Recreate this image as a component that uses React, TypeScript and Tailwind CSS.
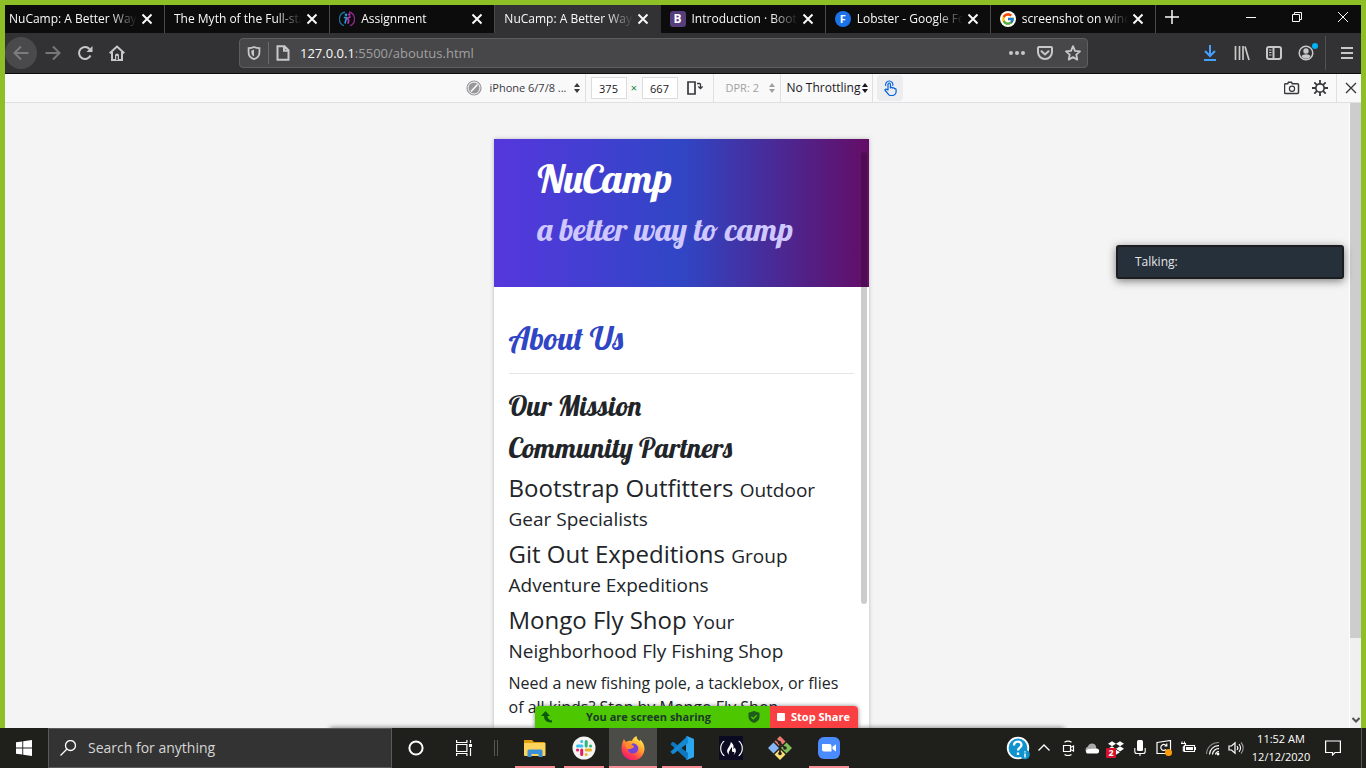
import type { ReactNode } from "react";
import { FcGoogle } from "react-icons/fc";
import { FaFreeCodeCamp, FaDropbox } from "react-icons/fa";

type IconProps = { children: ReactNode; className?: string; box?: string };

function Icon({ children, className = "size-4", box = "0 0 16 16" }: IconProps) {
  return (
    <svg viewBox={box} className={`shrink-0 ${className}`} fill="none" stroke="currentColor" strokeWidth="2" aria-hidden="true">
      {children}
    </svg>
  );
}

/* ---------- Tab strip ---------- */

const LearnIcon = () => (
  <Icon>
    <path d="M6 1A7.200 7.200 0 0 0 5 14.700" stroke="#1c6f9c" strokeWidth="1.300" />
    <path d="M10 1A7.200 7.200 0 0 1 11 14.700" stroke="#8a2a8c" strokeWidth="1.300" />
    <path d="M4.800 6.500h2.700L6 12.500" stroke="#1fa3e0" strokeWidth="1.600" />
    <path d="M11.500 5.500L8.500 7.500l1.300 2.300-1 3" stroke="#c02fb0" strokeWidth="1.600" />
    <circle cx="7" cy="3.800" r="1.300" fill="#1fa3e0" stroke="none" />
    <circle cx="10.300" cy="3.500" r="1.200" fill="#c02fb0" stroke="none" />
  </Icon>
);

const BootstrapBadge = () => (
  <span className="flex size-4 shrink-0 items-center justify-center rounded-[3px] bg-[#563d7c] text-xs font-bold text-white">B</span>
);
const FontsBadge = () => (
  <span className="flex size-4 shrink-0 items-center justify-center rounded-full bg-[#1a73e8] text-[11px] font-bold text-white">F</span>
);
const GoogleBadge = () => (
  <span className="flex size-4 shrink-0 items-center justify-center rounded-full bg-white">
    <FcGoogle className="size-3.5" />
  </span>
);

const tabs: { title: string; icon?: ReactNode; active?: boolean }[] = [
  { title: "NuCamp: A Better Way T" },
  { title: "The Myth of the Full-stac" },
  { title: "Assignment", icon: <LearnIcon /> },
  { title: "NuCamp: A Better Way T", active: true },
  { title: "Introduction · Boots", icon: <BootstrapBadge /> },
  { title: "Lobster - Google Fon", icon: <FontsBadge /> },
  { title: "screenshot on windo", icon: <GoogleBadge /> },
];

function TabStrip() {
  return (
    <div className="flex h-7 bg-[#0c0c0d] text-xs text-[#f9f9fa]">
      <div className="flex w-[1151px]">
        {tabs.map((t, i) => (
          <div
            key={i}
            className={`flex min-w-0 items-center border-r pr-[11px] ${i === 0 ? "w-[160px] pl-1" : "flex-1 pl-[9px]"} ${
              t.active ? "border-[#323234] bg-[#323234]" : "border-[#4a4a4c]"
            }`}
          >
            {t.icon && <span className="mr-1.5">{t.icon}</span>}
            <span className="min-w-0 flex-1 overflow-hidden whitespace-nowrap [mask-image:linear-gradient(to_left,transparent,black_26px)]">
              {t.title}
            </span>
            <button aria-label={`Close ${t.title}`} className="ml-1">
              <Icon className="size-3" box="0 0 12 12">
                <path d="M1.500 1.500l9 9M10.500 1.500l-9 9" />
              </Icon>
            </button>
          </div>
        ))}
      </div>
      <button aria-label="New tab" className="flex w-8 items-center justify-center pb-1">
        <Icon className="size-3.5" box="0 0 14 14">
          <path d="M7 0v14M0 7h14" strokeWidth="1.500" />
        </Icon>
      </button>
      <div className="ml-auto flex pb-1">
        <button aria-label="Minimize" className="flex w-[46px] items-center justify-center">
          <Icon className="size-2.5" box="0 0 10 10"><path d="M0 5.500h10" strokeWidth="1" /></Icon>
        </button>
        <button aria-label="Restore" className="flex w-[46px] items-center justify-center">
          <Icon className="size-2.5" box="0 0 10 10"><path d="M.5 2.500h7v7h-7zM2.500 2.500v-2h7v7h-2" strokeWidth="1" /></Icon>
        </button>
        <button aria-label="Close window" className="flex w-[41px] items-center justify-center pl-1">
          <Icon className="size-2.5" box="0 0 10 10"><path d="M0 0l10 10M10 0L0 10" strokeWidth="1" /></Icon>
        </button>
      </div>
    </div>
  );
}

/* ---------- Navigation bar ---------- */

function NavBar() {
  return (
    <div className="flex h-[41px] items-center border-b border-[#0c0c0d] bg-[#323234] pr-1.5 text-[#c8c8c9]">
      <div className="flex items-center">
        <button aria-label="Back" className="flex size-8 items-center justify-center rounded-full bg-[#4a4a4c] text-[#7c7c7e]">
          <Icon><path d="M15.500 8H1.500M8 1.500L1.500 8 8 14.500" /></Icon>
        </button>
        <button aria-label="Forward" className="flex size-8 items-center justify-center text-[#77777a]">
          <Icon><path d="M.5 8h14M8 1.500L14.500 8 8 14.500" /></Icon>
        </button>
        <button aria-label="Reload" className="flex size-8 items-center justify-center">
          <Icon>
            <path d="M13.500 10.500A6 6 0 1 1 12.500 4" />
            <path d="M15.500 1v6h-6z" fill="currentColor" stroke="none" />
          </Icon>
        </button>
        <button aria-label="Home" className="flex size-8 items-center justify-center">
          <Icon>
            <path d="M.7 8.200L8 1.500l7.300 6.700M3 7v8h10V7" />
            <path d="M6 15v-4.500a2 2 0 0 1 4 0V15z" fill="currentColor" stroke="none" />
            <path d="M8 11v4" stroke="#323234" strokeWidth="1.500" />
          </Icon>
        </button>
      </div>

      <div className="ml-[106px] flex h-[30px] flex-1 items-center rounded-sm border border-[#5e5e60] bg-[#474749] px-1.5">
        <button aria-label="Tracking protection" className="flex w-4 justify-center">
          <Icon className="size-3.5">
            <path d="M8 1.200C6 2.200 4 2.500 1.800 2.500v5C1.800 11 4.500 14 8 15c3.500-1 6.200-4 6.200-7.500v-5C12 2.500 10 2.200 8 1.200z" />
            <path d="M8 4v8c-2-1-3-2.500-3-4.500V5c1 0 2-.3 3-1z" fill="currentColor" stroke="none" />
          </Icon>
        </button>
        <span className="mx-1.5 h-[22px] w-px bg-[#6a6a6e]" />
        <button aria-label="Site information" className="flex w-4 justify-center">
          <Icon><path d="M3.500 1.200h6l4 4v9.600H2.500V1.200zM9 1.500v4.200h4.200" /></Icon>
        </button>
        <p className="mt-0.5 ml-[9px] flex-1 text-[13px] text-[#a0a0a2]">
          <span className="text-[#f9f9fa]">127.0.0.1</span>:5500/aboutus.html
        </p>
        <div className="flex items-center gap-3">
          <button aria-label="Page actions">
            <Icon>
              <g fill="currentColor" stroke="none"><circle cx="2" cy="8" r="2" /><circle cx="8" cy="8" r="2" /><circle cx="14" cy="8" r="2" /></g>
            </Icon>
          </button>
          <button aria-label="Save to Pocket">
            <Icon>
              <path d="M2 2h12a1 1 0 0 1 1 1v4a7 7 0 0 1-14 0V3a1 1 0 0 1 1-1z" />
              <path d="M4.500 6.200L8 9.500l3.500-3.300" strokeLinecap="round" />
            </Icon>
          </button>
          <button aria-label="Bookmark">
            <Icon><path d="M8 1.200l2 4.600 5 .5-3.700 3.400 1 4.900L8 12.100l-4.300 2.500 1-4.900L1 6.300l5-.5z" strokeLinejoin="round" strokeWidth="1.800" /></Icon>
          </button>
        </div>
      </div>

      <div className="ml-[114px] flex items-center gap-4">
        <button aria-label="Downloads" className="text-[#45a1ff]">
          <Icon><path d="M8 0v11M3 6l5 5 5-5M2 15h12" /></Icon>
        </button>
        <button aria-label="Library">
          <Icon><path d="M1.500 1v14M5.500 1v14M9 1v14M11 1.500l4 13.500" strokeWidth="1.700" /></Icon>
        </button>
        <button aria-label="Sidebars">
          <Icon><rect x="1" y="2" width="14" height="12" rx="2" /><path d="M7.500 2v12" /><path d="M3 5h2.500M3 7.500h2.500M3 10h2.500" strokeWidth="1" /></Icon>
        </button>
        <button aria-label="Account" className="relative">
          <Icon>
            <circle cx="8" cy="8" r="6.800" strokeWidth="1.500" />
            <circle cx="8" cy="6" r="2.700" fill="currentColor" stroke="none" />
            <path d="M3.500 11.500c1-3 8-3 9 0a5.500 5.500 0 0 1-9 0z" fill="currentColor" stroke="none" />
          </Icon>
          <span className="absolute -top-0.5 -right-1 size-1.5 rounded-full bg-[#00b3f4]" />
        </button>
      </div>
      <span className="mr-[13px] ml-[11px] h-[34px] w-px bg-[#525254]" />
      <button aria-label="Menu">
        <Icon><path d="M2 3h12M2 8h12M2 13h12" /></Icon>
      </button>
    </div>
  );
}

/* ---------- Responsive design toolbar ---------- */

const Updown = () => (
  <svg viewBox="0 0 6 10" className="h-2.5 w-1.5 shrink-0" fill="currentColor" aria-hidden="true">
    <path d="M0 4l3-4 3 4zM0 6h6l-3 4z" />
  </svg>
);

function DeviceToolbar() {
  const size = "h-[22px] w-9 border border-[#dcdcdd] bg-white text-center text-[11px] text-[#18181a] outline-none";
  return (
    <div className="grid h-[29px] grid-cols-[1fr_auto_1fr] items-center border-b border-[#e0e0e2] bg-[#f9f9fa] pl-0.5 text-[#38383d]">
      <span />
      <div className="flex h-full items-center text-[11px]">
        <button className="flex h-full w-[120px] items-center border-r border-[#e0e0e2]">
          <Icon className="size-4 text-[#98989a]">
            <circle cx="8" cy="8" r="7" strokeWidth="1.200" />
            <circle cx="8" cy="8" r="5.500" fill="currentColor" stroke="none" />
            <path d="M5 11.500L11.500 4.500" stroke="#fff" strokeWidth="1.500" />
          </Icon>
          <span className="ml-2 flex-1 text-left whitespace-nowrap">iPhone 6/7/8 ...</span>
          <span className="mr-[5px]"><Updown /></span>
        </button>
        <input aria-label="Width" className={`ml-[5px] ${size}`} defaultValue="375" />
        <span className="w-[15px] text-center text-[#12833a]">×</span>
        <input aria-label="Height" className={size} defaultValue="667" />
        <button aria-label="Rotate viewport" className="flex h-full w-9 items-center justify-center border-r border-[#e0e0e2]">
          <Icon>
            <path d="M1 2h7v12H1z" strokeWidth="1.700" />
            <path d="M10 3.500h2.500a1 1 0 0 1 1 1V8M11.300 6.500l2.200 2 2.200-2" strokeWidth="1.300" />
          </Icon>
        </button>
        <button className="flex h-full w-[67px] items-center justify-between border-r border-[#e0e0e2] pr-[5px] pl-3 text-[#a0a0a3]">
          DPR: 2 <Updown />
        </button>
        <button className="flex h-full w-[92px] items-center justify-between border-r border-[#e0e0e2] pr-1 pl-1.5 text-xs whitespace-nowrap text-[#18181a]">
          No Throttling <Updown />
        </button>
        <button aria-label="Enable touch simulation" className="ml-1 flex h-[26px] w-[26px] items-center justify-center rounded-sm bg-[#ededf0] text-[#0060df]">
          <Icon>
            <path d="M6 10V4.200a1.200 1.200 0 0 1 2.400 0V8c.3-.9 2-.8 2.200.2.500-.7 1.900-.4 2 .5.700-.3 1.500.1 1.500 1v1.800c0 2-1.500 4-4 4H8.500c-1 0-1.500-.5-2-1.200L3.200 10.500c-.6-1 .7-1.900 1.500-1.100z" strokeWidth="1.200" strokeLinejoin="round" />
            <path d="M3.800 6A3.700 3.700 0 1 1 10.700 6" strokeWidth="1.100" />
          </Icon>
        </button>
      </div>
      <div className="flex h-full items-center justify-end gap-3 pr-0.5">
        <button aria-label="Take a screenshot">
          <Icon><path d="M1.500 3.800h2.200l.8-1.600h3l.8 1.600h5.200a1 1 0 0 1 1 1v7.700a1 1 0 0 1-1 1h-12a1 1 0 0 1-1-1V4.800a1 1 0 0 1 1-1z" strokeWidth="1.500" /><circle cx="8" cy="8.800" r="2.600" strokeWidth="1.200" /></Icon>
        </button>
        <button aria-label="Settings">
          <Icon><circle cx="8" cy="8" r="4.200" strokeWidth="1.700" /><path d="M8 0v4M8 12v4M0 8h4M12 8h4M2.300 2.300l2.800 2.800M10.900 10.900l2.800 2.800M13.700 2.300l-2.800 2.800M5.100 10.900l-2.800 2.800" strokeWidth="1.800" /></Icon>
        </button>
        <span className="-ml-1 h-full w-px bg-[#e0e0e2]" />
        <button aria-label="Close responsive design mode" className="-ml-1.5 flex size-4 items-center justify-center">
          <Icon className="size-3" box="0 0 12 12"><path d="M1 1l10 10M11 1L1 11" strokeWidth="1.400" /></Icon>
        </button>
      </div>
    </div>
  );
}

/* ---------- Page inside the device ---------- */

const partners = [
  ["Bootstrap Outfitters", "Outdoor Gear Specialists"],
  ["Git Out Expeditions", "Group Adventure Expeditions"],
  ["Mongo Fly Shop", "Your Neighborhood Fly Fishing Shop"],
];

const script = "font-['Lobster','Liberation_Serif',serif] font-normal";

function PhonePage() {
  return (
    <div className="relative w-[375px] shrink-0 overflow-hidden bg-white text-[#212529] shadow-[0_0_4px_rgba(0,0,0,0.25)]">
      <header className="h-[148px] bg-[linear-gradient(to_right,#5637dd,#3046c5_50%,#640d66)] px-11 pt-[15px]">
        <h1 className={`${script} mb-2 text-[40px] leading-[48px] text-white`}>NuCamp</h1>
        <h2 className={`${script} text-[32px] leading-[38px] whitespace-nowrap text-[#cec8ff]`}>a better way to camp</h2>
      </header>
      <main className="px-[15px] pt-8">
        <h2 className={`${script} text-[32px] leading-[38px] text-[#3046c5]`}>About Us</h2>
        <hr className="mt-4 mb-[15px] border-[#e5e5e5]" />
        <h3 className={`${script} mb-2 text-[28px] leading-[34px]`}>Our Mission</h3>
        <h3 className={`${script} mb-2 text-[28px] leading-[34px]`}>Community Partners</h3>
        {partners.map(([name, kind]) => (
          <h4 key={name} className="mb-2 text-2xl leading-[29px]">
            {name} <small className="text-[19px] leading-[23px]">{kind}</small>
          </h4>
        ))}
        <p className="text-base leading-6">
          Need a new fishing pole, a tacklebox, or flies of all kinds? Stop by Mongo Fly Shop.
        </p>
      </main>
      <div className="absolute top-[13px] right-0.5 h-[452px] w-1.5 rounded-full bg-black/20" />
    </div>
  );
}

/* ---------- Meeting overlays ---------- */

function ShareBar() {
  return (
    <div className="absolute bottom-0 left-[530px] flex h-[22px] w-[323px] overflow-hidden rounded-t text-[11px] font-bold shadow-[0_0_4px_rgba(0,0,0,0.5)]">
      <div className="flex flex-1 items-center justify-between bg-[#4dc700] pr-2.5 pl-1.5 text-[#1c3a2c]">
        <Icon className="size-3 text-[#0a5a10]" box="0 0 12 12"><path d="M4.500 0L9 5H6.500c0 2.500 1.500 4 4.500 4.500v2C6 11.500 3 9.500 3 5H0z" fill="currentColor" stroke="none" /></Icon>
        <span className="pr-1">You are screen sharing</span>
        <Icon className="size-3 text-[#1d5c1a]" box="0 0 12 12">
          <path d="M6 0l5.500 1.800V6c0 3-2.500 5-5.500 6C3 11 .5 9 .5 6V1.800z" fill="currentColor" stroke="none" />
          <path d="M3.300 5.800l2 2 3.400-3.500" stroke="#4dc700" strokeWidth="1.300" />
        </Icon>
      </div>
      <button className="flex w-[88px] items-center gap-1.5 bg-[#fb4043] pl-[7px] whitespace-nowrap text-white">
        <span className="size-2 rounded-[1px] bg-white" />
        Stop Share
      </button>
    </div>
  );
}

/* ---------- Taskbar ---------- */

const Explorer = () => (
  <Icon className="size-6" box="0 0 24 24">
    <g stroke="none">
      <path d="M1 4h8l2 2h10a1 1 0 0 1 1 1v3H1z" fill="#e0a010" />
      <path d="M1 7h21.500v12a1 1 0 0 1-1 1H2a1 1 0 0 1-1-1z" fill="#fcd45c" />
      <path d="M4.500 21v-6a1.500 1.500 0 0 1 1.500-1.500h12a1.500 1.500 0 0 1 1.500 1.500v6H15.500v-3h-7v3z" fill="#3a8fd8" />
    </g>
  </Icon>
);
const Slack = () => (
  <Icon className="size-6" box="0 0 24 24">
    <circle cx="12" cy="12" r="11.500" fill="#f6f4f3" stroke="none" />
    <g strokeWidth="3" strokeLinecap="round">
      <path d="M9.700 5.500v.1M5.500 9.900h4.400" stroke="#36c5f0" />
      <path d="M14.200 5.500v4.400M18.500 9.900h.1" stroke="#2eb67d" />
      <path d="M14.200 14.100h4.400M14.200 18.500v.1" stroke="#ecb22e" />
      <path d="M9.700 14.100v4.400M5.500 14.100h.1" stroke="#e01e5a" />
    </g>
  </Icon>
);
const Firefox = () => (
  <Icon className="size-6" box="0 0 24 24">
    <defs>
      <linearGradient id="ffx" x1=".8" y1=".05" x2=".2" y2="1">
        <stop offset="0" stopColor="#fff44f" /><stop offset=".4" stopColor="#ff9a2e" /><stop offset=".75" stopColor="#ff3750" /><stop offset="1" stopColor="#e31587" />
      </linearGradient>
    </defs>
    <g stroke="none">
      <path d="M3 3c.5 1.500 1.300 2.300 2.300 3C7 4.800 9.500 4.700 11 5c.5-2 2-4 4.500-5 .2 2.500 1.500 3.500 3 5 .5-.5.500-1 .5-1.500 3 2.500 4.500 6 4.500 9.200A11.500 11.500 0 0 1 .5 13C.5 9 1.500 5.500 3 3z" fill="url(#ffx)" />
      <path d="M11 7.500c3-.5 6.500 1.500 6.300 5.200-.2 3-2.500 4.800-5.300 4.800s-5.200-2-5.200-4.800c1.400.8 3 .5 4-.3 1-.7 2-1 2.300-1.600-1.300-.2-2.300-.5-2.600-1.700 0-.7.2-1.200.5-1.600z" fill="#7543d6" />
      <path d="M4 7.500c2-1 4-.5 5 1.200 1 .6 3 .2 4 1.500-.6 1.300-2.600 1.300-3.700 2.300-1 .8-2.500.6-3 .2C4.500 11 3.700 9.500 4 7.500z" fill="#ff8a30" />
    </g>
  </Icon>
);
const VsCode = () => (
  <Icon className="size-6" box="0 0 24 24">
    <g stroke="none">
      <path d="M17 0L24 3v18l-7 3-1-1V1z" fill="#2ba7f0" />
      <path d="M17.500 24L1 8.700l-.2-1L2.500 6l1 0L18 17z" fill="#0f77bd" />
      <path d="M17.500 0L1 15.300l-.2 1L2.500 18h1L18 7z" fill="#1488d0" />
    </g>
  </Icon>
);
const FreeCodeCamp = () => (
  <span className="flex size-6 items-center justify-center bg-[#0a0a23] text-white"><FaFreeCodeCamp className="size-[23px]" /></span>
);
const Git = () => (
  <Icon className="size-6" box="0 0 24 24">
    <g stroke="none">
      <path d="M12 0l5.500 5.500L12 11 6.500 5.500z" fill="#ec7a70" />
      <path d="M18.500 6.500L24 12l-5.500 5.500L13 12z" fill="#7fbf5a" />
      <path d="M5.500 6.500L11 12l-5.500 5.500L0 12z" fill="#86b4f4" />
      <path d="M12 13l5.500 5.500L12 24l-5.500-5.500z" fill="#f8de76" />
      <circle cx="11.500" cy="6.500" r="1.700" fill="#2b211c" /><circle cx="12" cy="17.500" r="1.800" fill="#2b211c" /><circle cx="17" cy="12" r="1.800" fill="#2b211c" />
    </g>
    <path d="M12 17.500V7M12 7l5 5M7.500 3l4.500 4" stroke="#2b211c" strokeWidth="1.700" />
  </Icon>
);
const Zoom = () => (
  <Icon className="size-6" box="0 0 24 24">
    <rect x="1" y="1" width="22" height="22" rx="6" fill="#4a8cff" stroke="none" />
    <path d="M5 8h7.500a2 2 0 0 1 2 2v5.500H7a2 2 0 0 1-2-2zM15.500 10.800L19 8.300v7.200l-3.500-2.500z" fill="#fff" stroke="none" />
  </Icon>
);

const apps = [
  { name: "File Explorer", icon: <Explorer />, line: "w-10" },
  { name: "Slack", icon: <Slack />, line: "w-10" },
  { name: "Firefox", icon: <Firefox />, line: "w-12", active: true },
  { name: "Visual Studio Code", icon: <VsCode />, line: "w-10" },
  { name: "freeCodeCamp", icon: <FreeCodeCamp />, line: "" },
  { name: "Git Bash", icon: <Git />, line: "" },
  { name: "Zoom", icon: <Zoom />, line: "w-10" },
];

function Tray() {
  return (
    <div className="ml-auto flex h-full items-center text-white">
      <button aria-label="Support" className="mr-1.5">
        <Icon className="size-6" box="0 0 24 24">
          <circle cx="12" cy="12" r="10.300" fill="#0f93cf" stroke="#fff" strokeWidth="1.800" />
          <path d="M8 9.500c0-5 7.500-5 7.500-.6 0 2.600-3.500 2.800-3.500 5.600M12 16.500v2.500" strokeWidth="2.300" />
          <circle cx="19" cy="18.500" r="4.800" fill="#0f93cf" stroke="none" />
          <path d="M19 15.300v1.200M19 17.500v4" strokeWidth="1.400" />
        </Icon>
      </button>
      <div className="flex items-center gap-2">
        <button aria-label="Show hidden icons"><Icon><path d="M2.500 10.500L8 5l5.500 5.500" strokeWidth="1.300" /></Icon></button>
        <button aria-label="Meet now"><Icon><path d="M3.500 5.500h7v6h-7zM10.500 7.500l3-1.500v5l-3-1.500M4.500 2.300c2-1.300 5-1.300 7 0M4.500 14.500c2 1.300 5 1.300 7 0" strokeWidth="1.200" /></Icon></button>
        <button aria-label="OneDrive"><Icon><path d="M3.500 13a3.300 3.300 0 0 1 .2-6.200A4.500 4.500 0 0 1 12 6l.5 7z" fill="#a9a9a9" stroke="none" /><path d="M3 13.500a2.500 2.500 0 0 1 1.500-4.500l8.500-.5a2.600 2.600 0 0 1 .5 5z" fill="#fff" stroke="none" /></Icon></button>
        <button aria-label="Dropbox" className="relative">
          <FaDropbox className="size-4" />
          <span className="absolute -bottom-0.5 -left-0.5 flex h-2.5 w-2.5 items-center justify-center rounded-[1px] bg-[#d9102b] text-[9px] font-bold">2</span>
        </button>
        <button aria-label="Microphone"><Icon><rect x="5" y="0" width="6" height="11" rx="1.500" fill="#fff" stroke="none" /><path d="M2.800 8v3.500a2 2 0 0 0 2 2h6.400a2 2 0 0 0 2-2V8M8 13.500V16" strokeWidth="1.100" /></Icon></button>
        <button aria-label="Updates"><Icon><path d="M1 2.500l13.500-2v13L1 13.500zM10.500 6A3 3 0 1 0 10 9.500M10.800 3.500V6H8.500" strokeWidth="1.200" /><circle cx="12.500" cy="12.500" r="3.500" fill="#ff9a0a" stroke="none" /></Icon></button>
        <button aria-label="Battery"><Icon><path d="M4.500 5.500h10v6h-10zM15.500 7v3M2 1.500v2M4.500 1.500v2M1 3.500h4.500v1.500L3.300 7v4h1" strokeWidth="1.100" /><path d="M6 7h7v3H6z" fill="#fff" stroke="none" /></Icon></button>
        <button aria-label="Wi-Fi"><Icon><path d="M2.500 14A12 12 0 0 1 15 2.500" stroke="#888" strokeWidth="1.200" /><path d="M5.500 14.500A9 9 0 0 1 15 5.700M8.500 14.500A6 6 0 0 1 15 8.700M11.500 14.500a3.500 3.500 0 0 1 3.500-3" strokeWidth="1.200" /><circle cx="14" cy="14" r="1.400" fill="#fff" stroke="none" /></Icon></button>
        <button aria-label="Volume"><Icon><path d="M1 6h2.500L7 2.800v10.400L3.500 10H1z" strokeWidth="1.200" /><path d="M9 6a3 3 0 0 1 0 4M11 4.200a5.500 5.500 0 0 1 0 7.600" strokeWidth="1.100" /><path d="M13 2.500a8 8 0 0 1 0 11" stroke="#999" strokeWidth="1.100" /></Icon></button>
      </div>
      <div className="w-[74px] text-center text-[11px] leading-[18px] whitespace-nowrap">
        <p>11:52 AM</p>
        <p>12/12/2020</p>
      </div>
      <button aria-label="Notifications" className="mr-5 ml-[7px]">
        <Icon className="size-4"><path d="M.6 1h14.800v11.500H10L7.500 15v-2.500H.6z" strokeWidth="1.200" /></Icon>
      </button>
      <span className="mr-1 h-full w-px bg-[#55564f]" />
    </div>
  );
}

function Taskbar() {
  return (
    <footer className="flex h-10 shrink-0 items-center bg-[#1f201b]">
      <button aria-label="Start" className="flex h-full w-12 items-center justify-center text-white">
        <Icon><path d="M0 2.300L6.300 1.400v6.100H0zM7.200 1.200L16 0v7.500H7.200zM0 8.400h6.300v6.200L0 13.700zM7.200 8.400H16V16l-8.800-1.300z" fill="currentColor" stroke="none" /></Icon>
      </button>
      <label className="flex h-full w-[344px] items-center gap-3 border border-[#5a5a5a] bg-[#333333] pl-[11px] text-white">
        <Icon><circle cx="10.500" cy="5.500" r="5" strokeWidth="1.300" /><path d="M7 9L.5 15.500" strokeWidth="1.300" /></Icon>
        <input
          type="text"
          aria-label="Search"
          placeholder="Search for anything"
          className="w-full bg-transparent text-sm text-white outline-none placeholder:text-[#d6d6d6]"
        />
      </label>
      <button aria-label="Cortana" className="flex w-12 justify-center text-white">
        <Icon><circle cx="8" cy="8" r="6.600" /></Icon>
      </button>
      <button aria-label="Task view" className="flex w-12 justify-center text-white">
        <Icon><path d="M.6 0v2.500h10.300V0M.6 16v-2.500h10.300V16M.6 4.500h10.300v7H.6zM14.500 0v3M14.500 8v8" strokeWidth="1.200" /><path d="M13 4h3v3h-3z" fill="#fff" stroke="none" /></Icon>
      </button>
      <span className="mr-[13px] ml-1.5 h-4 w-1 border-x border-[#55564f]" />
      <div className="flex h-full gap-px">
        {apps.map((a) => (
          <button
            key={a.name}
            aria-label={a.name}
            className={`flex h-full w-12 flex-col items-center justify-between pt-2 ${a.active ? "bg-[#4b4c47]" : ""}`}
          >
            {a.icon}
            <span className={`h-0.5 bg-[#f78d94] ${a.line}`} />
          </button>
        ))}
      </div>
      <Tray />
    </footer>
  );
}

export default function App() {
  return (
    <div className="flex h-screen flex-col overflow-hidden bg-[#1f201b] font-['Open_Sans','Noto_Sans',sans-serif]">
      <div className="relative flex min-h-0 flex-1 flex-col overflow-hidden border-x-[5px] border-t-[5px] border-[#8ebf26]">
        <TabStrip />
        <NavBar />
        <DeviceToolbar />
        <div className="flex min-h-0 flex-1 bg-[#f4f4f5]">
          <div className="flex min-w-0 flex-1 justify-center overflow-hidden pt-9 pl-2">
            <PhonePage />
          </div>
          <div className="flex w-3 flex-col items-center justify-between border-l border-white bg-[#f0f0f0] pb-1 text-[#505050]">
            <div className="h-[535px] w-full bg-[#cdcdcd]" />
            <Icon className="size-2" box="0 0 8 8"><path d="M.5 2L4 5.500 7.500 2" /></Icon>
          </div>
        </div>
        <div className="absolute -bottom-1 left-[325px] h-1 w-[734px] shadow-[0_0_5px_rgba(0,0,0,0.6)]" />
        <ShareBar />
        <div className="absolute top-[240px] right-[17px] flex h-[34px] w-[228px] items-center rounded-[3px] border-2 border-[#1b1d1f] bg-[#26303a] pl-[17px] text-xs text-[#e4e6e8] shadow-[0_2px_8px_rgba(0,0,0,0.5)]">
          Talking:
        </div>
      </div>
      <Taskbar />
    </div>
  );
}
